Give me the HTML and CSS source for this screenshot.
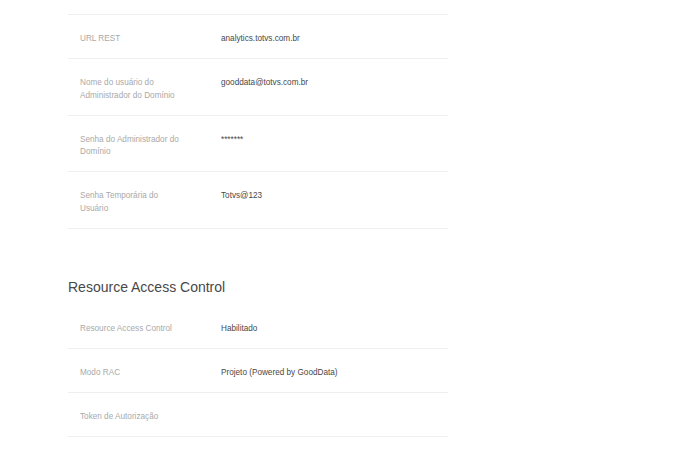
FILE: index.html
```html
<!DOCTYPE html>
<html lang="pt-BR">
<head>
    <meta charset="UTF-8">
    <meta name="viewport" content="width=device-width, initial-scale=1.0">
    <title>Configurações</title>
    <link rel="stylesheet" href="styles.css">
</head>
<body>
    <div class="page">
        <div class="settings-list first">
            <div class="settings-row">
                <div class="settings-label">URL REST</div>
                <div class="settings-value">analytics.totvs.com.br</div>
            </div>
            <div class="settings-row">
                <div class="settings-label">Nome do usuário do Administrador do Domínio</div>
                <div class="settings-value">gooddata@totvs.com.br</div>
            </div>
            <div class="settings-row">
                <div class="settings-label">Senha do Administrador do Domínio</div>
                <div class="settings-value">*******</div>
            </div>
            <div class="settings-row">
                <div class="settings-label">Senha Temporária do Usuário</div>
                <div class="settings-value">Totvs@123</div>
            </div>
        </div>

        <h2 class="section-title">Resource Access Control</h2>
        <div class="settings-list">
            <div class="settings-row">
                <div class="settings-label">Resource Access Control</div>
                <div class="settings-value">Habilitado</div>
            </div>
            <div class="settings-row">
                <div class="settings-label">Modo RAC</div>
                <div class="settings-value">Projeto (Powered by GoodData)</div>
            </div>
            <div class="settings-row">
                <div class="settings-label">Token de Autorização</div>
                <div class="settings-value"></div>
            </div>
        </div>
    </div>
</body>
</html>
```

FILE: styles.css
```css
* {
    margin: 0;
    padding: 0;
    box-sizing: border-box;
}

body {
    font-family: "Liberation Sans", Arial, sans-serif;
    background-color: #fff;
    color: #444;
}

.page {
    width: 380px;
    margin-left: 68px;
    padding-top: 14px;
}

.settings-list.first {
    border-top: 1px solid #efefef;
}

.settings-row {
    display: grid;
    grid-template-columns: 105px 1fr;
    column-gap: 36px;
    padding: 18px 12px 12.5px;
    border-bottom: 1px solid #efefef;
    font-size: 8.2px;
    line-height: 12.5px;
}

.settings-label {
    color: #a9a9a9;
}

.settings-value {
    color: #484848;
}

.section-title {
    font-size: 14px;
    font-weight: 400;
    line-height: 17px;
    color: #484848;
    margin-top: 50px;
    margin-bottom: 9px;
}
```
